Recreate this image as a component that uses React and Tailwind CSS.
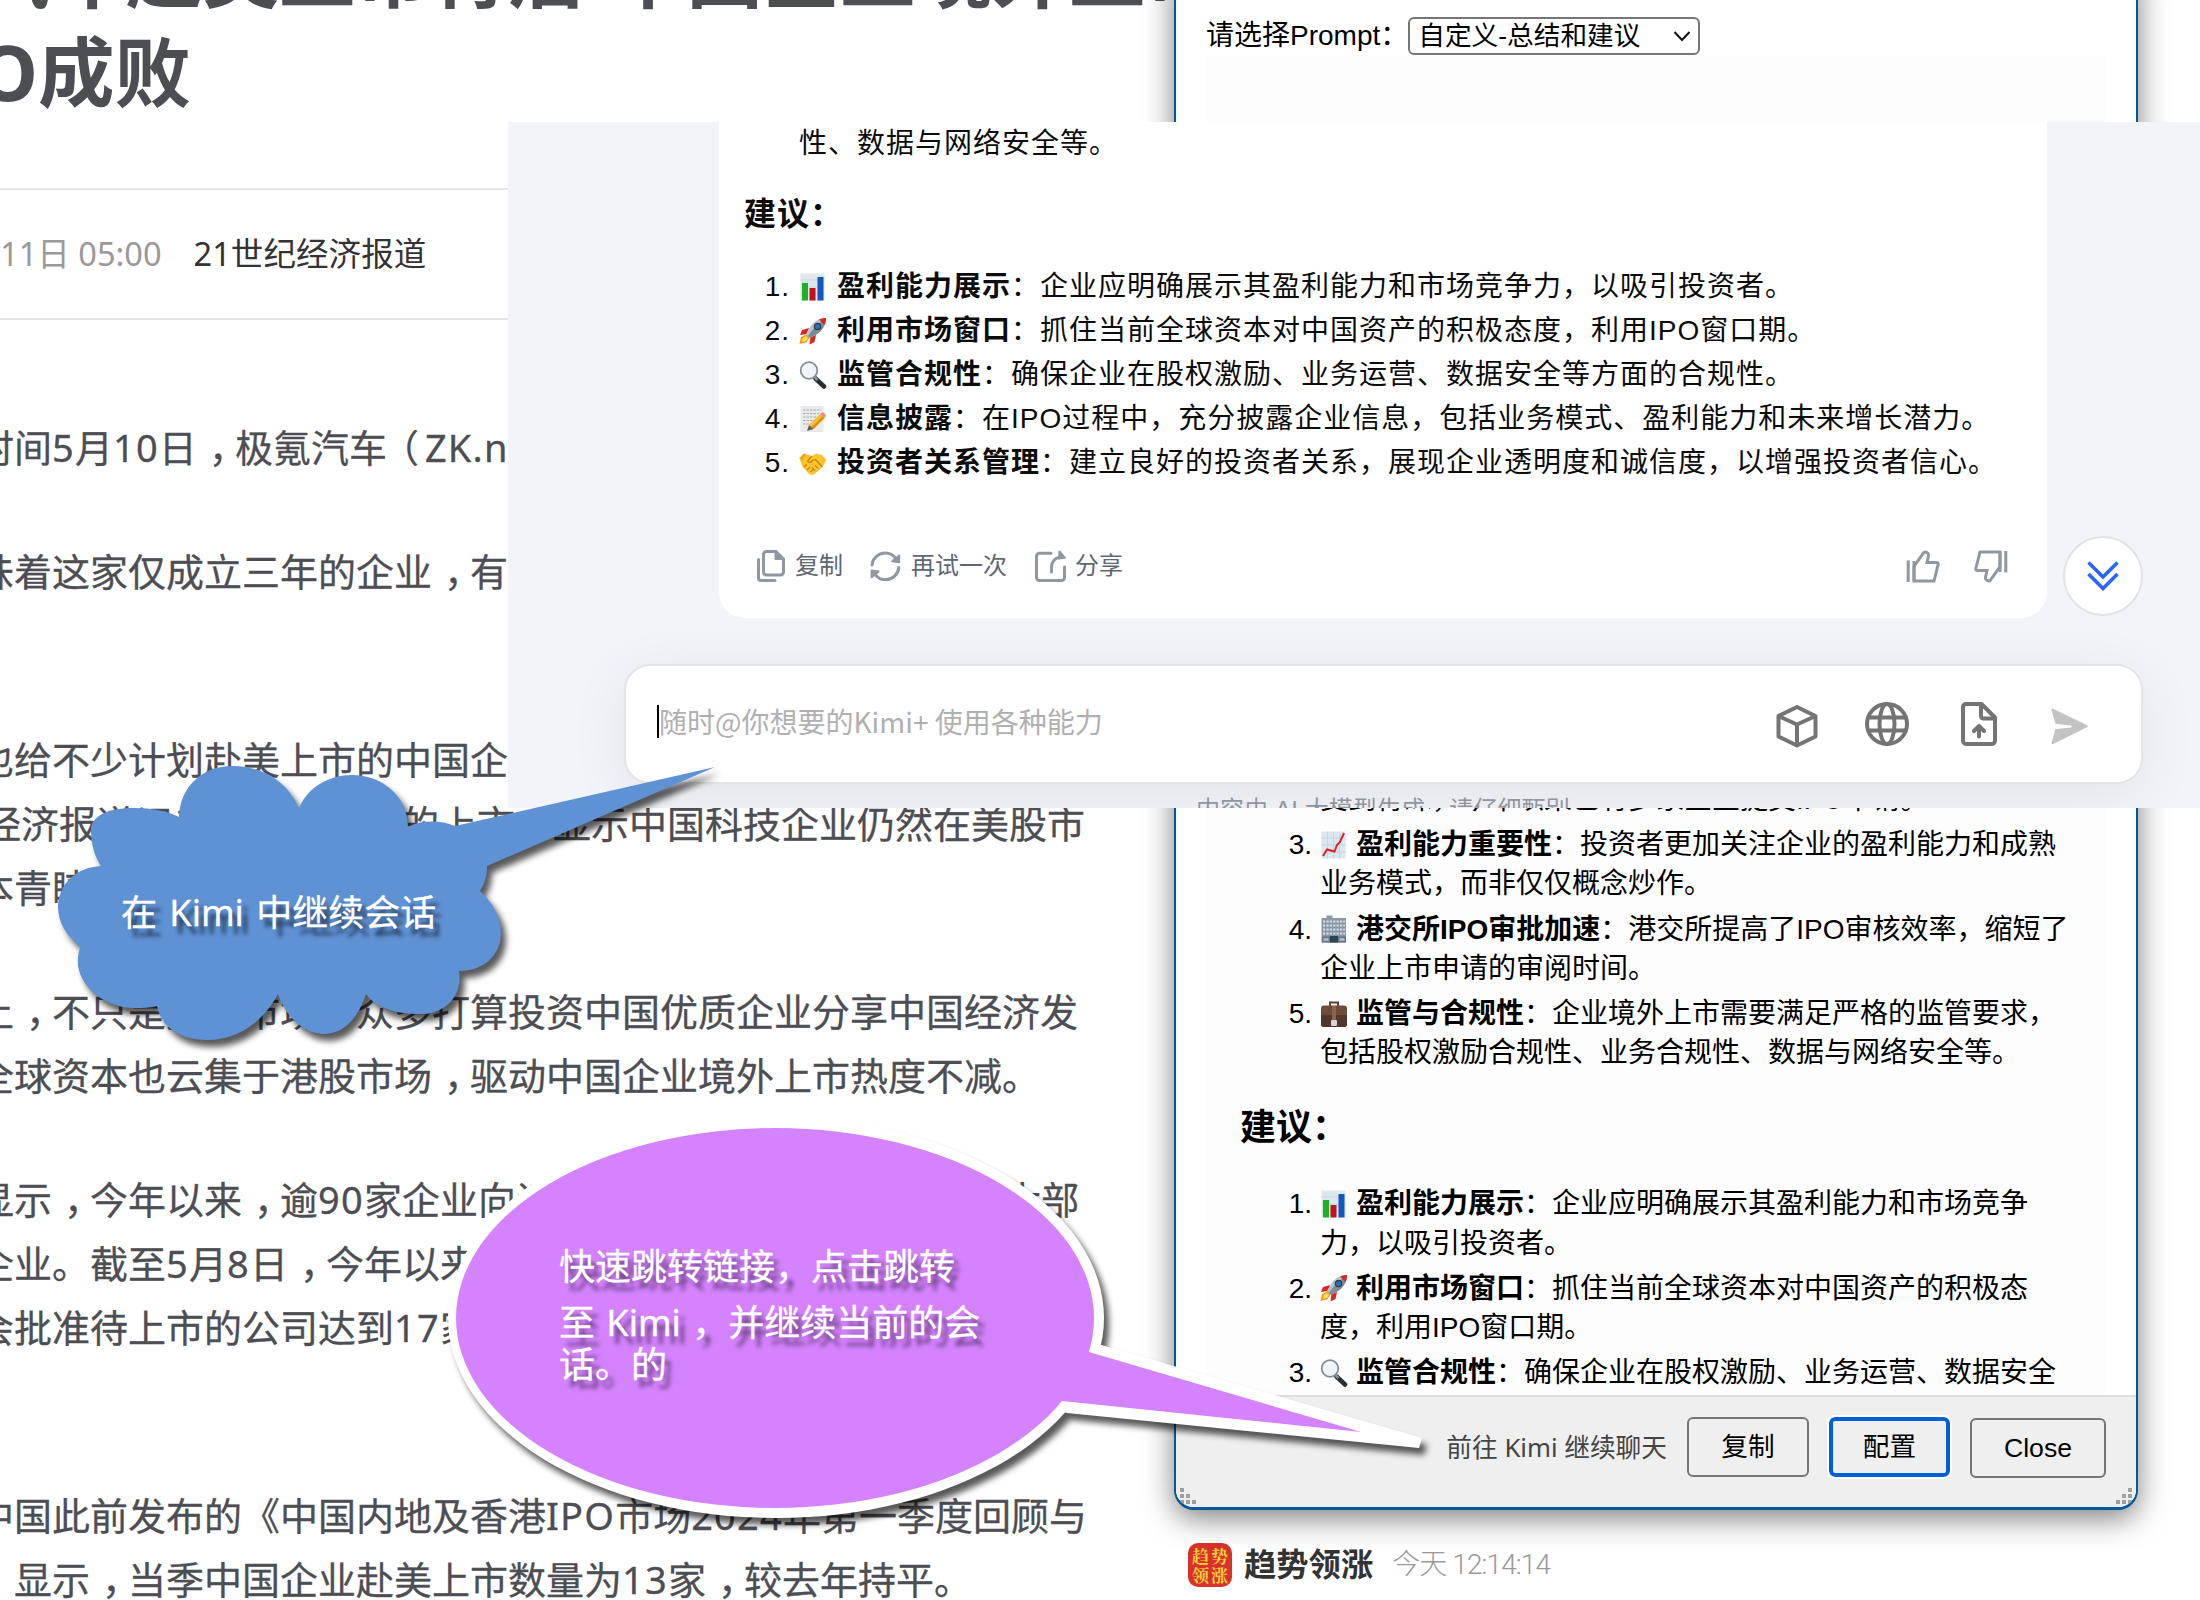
import React from "react";

const CJK = "font-['Noto_Sans','Noto_Sans_CJK_SC',sans-serif]";
const HEL = "font-['Liberation_Sans','Noto_Sans_CJK_SC',sans-serif]";

/* ---------- emoji drawings ---------- */

function BarChart() {
  return (
    <svg viewBox="0 0 28 28" className="size-full">
      <rect x="1.5" y="0.5" width="24" height="27" fill="#dfe7ee" />
      <path d="M1.5 7h24M1.5 14h24M1.5 21h24" stroke="#c9d5df" strokeWidth="1" />
      <rect x="3" y="10" width="6" height="17.5" fill="#1db224" />
      <rect x="10.5" y="15" width="6" height="12.5" fill="#c1131f" />
      <rect x="18.5" y="4" width="6" height="23.5" fill="#1557c0" />
    </svg>
  );
}

function Rocket() {
  return (
    <svg viewBox="0 0 28 28" className="size-full">
      <path d="M8 17 2 20l-1.500 7 6.500-1.500L11 20z" fill="#f59a1b" />
      <path d="M7 19l-3 2-1 4 4-1 2-3z" fill="#ffe25a" />
      <path d="M10 11 3 13l-2 5 7-1zM17 18l-1.500 7-5 2.500 1-8z" fill="#d8281f" />
      <path d="M27 1c-6 0-12 3-16 9l-4 7 4 4 7-4c6-4 9-10 9-16z" fill="#b9c3cd" />
      <path d="M27 1c-5 3-12 9-18 18l2 2 7-4c6-4 9-10 9-16z" fill="#7d8a98" />
      <path d="M27 1c-2.500 0-4.800.5-7 1.500L25.500 8C26.500 5.800 27 3.500 27 1z" fill="#d8281f" />
      <circle cx="18.500" cy="9.500" r="3.200" fill="#2f6fae" stroke="#2b3b4a" strokeWidth="1.200" />
    </svg>
  );
}

function Magnifier() {
  return (
    <svg viewBox="0 0 28 28" className="size-full">
      <path d="m16.500 17.500 8.500 8" stroke="#2c2f33" strokeWidth="4.600" strokeLinecap="round" />
      <path d="m15.500 16 3 3" stroke="#8c9299" strokeWidth="2.500" />
      <circle cx="10" cy="9.500" r="8.300" fill="#eef4f8" stroke="#858d95" strokeWidth="1.800" />
      <path d="M5 8.500c.6-2.200 2.200-3.600 4.500-4" stroke="#fff" strokeWidth="1.800" fill="none" />
    </svg>
  );
}

function Memo() {
  return (
    <svg viewBox="0 0 28 28" className="size-full">
      <rect x="1.500" y="1" width="23" height="26" fill="#e9eaeb" />
      <path d="M4 5h18M4 8.500h16M4 12h17M4 15.500h12M4 19h8" stroke="#a7abaf" strokeWidth="1.100" strokeDasharray="2.500 1" />
      <path d="m10 20 11-11 4.500 4-11 11z" fill="#f6bf2d" />
      <path d="m12.500 22.300 11-11 2 1.700-11 11z" fill="#dc9312" />
      <path d="m21 9 1.800-1.500c1.500-.8 4.600 2 3.800 3.800L25.500 13z" fill="#ef8b8b" />
      <path d="m10 20-2 6 6.500-2z" fill="#6b5a48" />
    </svg>
  );
}

function Handshake() {
  return (
    <svg viewBox="0 0 28 28" className="size-full">
      <path d="M.5 9 5 4.500l8 2.500 4-2.500 6 1.500 4.500 5-4 7-8.500 7.500-3 .5-3-2L3 17z" fill="#fbc52f" />
      <path d="m13 7-4.500 5c1 2 3.500 1.500 5-.5l3-1 7 7.500" stroke="#c98512" strokeWidth="1.300" fill="none" />
      <path d="m5 18 3-2.500M8 21l3-3M11.500 23l2.500-2.500M16 21.500l-3-3M19 19.500l-3-3" stroke="#c98512" strokeWidth="1.200" />
      <path d="M.5 9 5 4.500 7 6 3 12z" fill="#f0a71d" />
    </svg>
  );
}

function ChartUp() {
  return (
    <svg viewBox="0 0 28 28" className="size-full">
      <rect x="1.500" y="0.500" width="24" height="27" fill="#dce7ef" />
      <path d="M1.500 7h24M1.500 14h24M1.500 21h24M7.500.5v27M13.500.5v27M19.500.5v27" stroke="#c4d2dd" strokeWidth=".9" />
      <path d="m3 25 4-6.500 7.500 2L17 14l3-3L24 2" stroke="#d9232b" strokeWidth="2" fill="none" />
    </svg>
  );
}

function Office() {
  return (
    <svg viewBox="0 0 28 28" className="size-full">
      <path d="M1.500 3h5V.5h6V3H26v24.500H1.500z" fill="#8d979f" />
      <path d="M3 6.500h22M3 10.500h22M3 14.500h22M3 18.500h22" stroke="#c8e0ee" strokeWidth="2.200" strokeDasharray="2.200 1.200" />
      <rect x="2" y="21.500" width="24" height="6" fill="#6c767e" />
      <rect x="10" y="21" width="8" height="6.500" fill="#2d4552" />
      <path d="M3.500 24.500h5M19.500 24.500h5" stroke="#a8c6d6" strokeWidth="2.500" />
    </svg>
  );
}

function Briefcase() {
  return (
    <svg viewBox="0 0 28 28" className="size-full">
      <path d="M10 6V2.500h8V6" stroke="#5b4335" strokeWidth="2" fill="none" />
      <rect x="1" y="5.500" width="26" height="21.500" rx="3" fill="#6d4c3c" />
      <path d="M1 15h26v9a3 3 0 0 1-3 3H4a3 3 0 0 1-3-3z" fill="#51362a" />
      <rect x="12" y="6" width="4" height="14" fill="#8a6450" />
      <rect x="11" y="20" width="6" height="6" rx="1" fill="#d8d4ce" />
    </svg>
  );
}

/* ---------- background article ---------- */

function Line({ children, className = "" }) {
  const parts = children.split(/([，（]|[A-Za-z0-9.]+)/);
  return (
    <p className={"h-[64px] leading-[64px] whitespace-nowrap " + className}>
      {parts.map((p, i) => {
        if (p === "，") return <span key={i} className="relative left-[12px]">，</span>;
        if (p === "（") return <span key={i} className="relative -left-[6px]">（</span>;
        if (/^[A-Za-z0-9.]+$/.test(p)) return <span key={i} className="tracking-[1.200px]">{p}</span>;
        return p;
      })}
    </p>
  );
}

function Article() {
  return (
    <article className={"w-[1175px] shrink-0 overflow-hidden text-[#4d4e53] " + CJK}>
      <h1 className="-mt-[77px] h-[198px] text-[76.500px] leading-[99px] font-bold whitespace-nowrap">
        <span className="-ml-[27px] block [word-spacing:5px]">汽车赴美上市背后 中国企业境外上市</span>
        <span className="flex w-[191px] justify-end">IPO成败</span>
      </h1>
      <div className="mt-[67px] flex h-[132px] items-center border-y-2 border-[#e5e5e5] text-[32.600px] whitespace-nowrap">
        <span className="mt-px text-[#999]">11日 05:00</span>
        <span className="mt-px ml-[32px] text-[#333]">21世纪经济报道</span>
      </div>
      <div className="mt-[95px] -ml-[24px] text-[38px] [-webkit-text-stroke:0.300px]">
        <Line>时间5月10日，极氪汽车（ZK.n</Line>
        <Line className="mt-[60px]">味着这家仅成立三年的企业，有</Line>
        <div className="mt-[124px]">
          <Line>也给不少计划赴美上市的中国企业</Line>
          <Line className="ml-[7px]">经济报道记者表示，极氪的上市，显示中国科技企业仍然在美股市</Line>
          <Line>本青睐。</Line>
        </div>
        <div className="mt-[60px]">
          <Line>上，不只是美股市场，众多打算投资中国优质企业分享中国经济发</Line>
          <Line>全球资本也云集于港股市场，驱动中国企业境外上市热度不减。</Line>
        </div>
        <div className="mt-[60px]">
          <Line>显示，今年以来，逾90家企业向证监会提交境外IPO备案，绝大部</Line>
          <Line>企业。截至5月8日，今年以来已有多家企业完成境外备案，均可</Line>
          <Line>会批准待上市的公司达到17家。</Line>
        </div>
        <div className="mt-[124px]">
          <Line>中国此前发布的《中国内地及香港IPO市场2024年第一季度回顾与</Line>
          <Line>》显示，当季中国企业赴美上市数量为13家，较去年持平。</Line>
        </div>
      </div>
    </article>
  );
}

function FeedRow() {
  return (
    <aside className="mb-[11px] ml-[13px] flex items-center self-end">
      <div className="grid size-[44px] grid-cols-2 place-items-center rounded-[10px] bg-[#d8332a] p-[3px] font-['Noto_Serif_CJK_SC','Noto_Sans_CJK_SC',serif] text-[17px] leading-[18px] font-bold text-[#f8d33c]">
        <span>趋</span>
        <span>势</span>
        <span>领</span>
        <span>涨</span>
      </div>
      <span className={"ml-[12px] text-[32.300px] leading-[48px] font-bold text-[#333] " + HEL}>趋势领涨</span>
      <span className="ml-[19px] font-['Roboto','Noto_Sans_CJK_SC',sans-serif] text-[28px] leading-[48px] font-light tracking-[-0.900px] text-[#999]">今天 12:14:14</span>
    </aside>
  );
}

/* ---------- assistant dialog ---------- */

function Item({ n, icon, title, first, second }) {
  return (
    <li className="mb-[6px] flex leading-[39.200px] whitespace-nowrap">
      <span className="mr-[8px] w-[60px] text-right">{n}.</span>
      <div>
        <div className="flex items-center">
          <span className="mr-[8px] size-[28px]">{icon}</span>
          <b>{title}</b>：{first}
        </div>
        {second && <div>{second}</div>}
      </div>
    </li>
  );
}

function Grip({ flip }) {
  const dots = [[0, 0], [0, 6], [6, 6], [0, 12], [6, 12], [12, 12]];
  return (
    <svg width="16" height="16" viewBox="0 0 16 16" className={flip ? "-scale-x-100" : ""}>
      {dots.map(([x, y]) => (
        <rect key={x + "-" + y} x={x} y={y} width="4" height="4" fill="#a0a0a0" />
      ))}
    </svg>
  );
}

function Dialog() {
  return (
    <section className={"absolute top-[-40px] left-[1174px] flex h-[1550px] w-[964px] flex-col overflow-hidden rounded-[20px] border-2 border-b-[3px] border-[#00599c] bg-white text-[28px] text-black shadow-[0_8px_30px_rgba(0,0,0,0.5)] " + HEL}>
      <header className="mt-[55px] ml-[30px] flex h-[38px] shrink-0 items-center">
        <span>请选择Prompt：</span>
        <div className="flex h-[38px] w-[292px] items-center justify-between rounded-[6px] border-2 border-[#767676] pr-[7px] pl-[8px] text-[26.670px]">
          <span>自定义-总结和建议</span>
          <svg width="18" height="12" viewBox="0 0 18 12" fill="none" stroke="#111" strokeWidth="2">
            <path d="m1.500 2 7.500 8 7.500-8" />
          </svg>
        </div>
      </header>
      <div className="mx-[30px] flex min-h-0 flex-1 flex-col overflow-hidden bg-[#fdfdfd]">
        <ol className="mt-[725px] ml-[46px]">
          <li className="mb-[6px] ml-[68px] leading-[39.200px] whitespace-nowrap">受到青睐，今年以来已有多家企业提交IPO申请。</li>
          <Item n={3} icon={<ChartUp />} title="盈利能力重要性" first="投资者更加关注企业的盈利能力和成熟" second="业务模式，而非仅仅概念炒作。" />
          <Item n={4} icon={<Office />} title="港交所IPO审批加速" first="港交所提高了IPO审核效率，缩短了" second="企业上市申请的审阅时间。" />
          <Item n={5} icon={<Briefcase />} title="监管与合规性" first="企业境外上市需要满足严格的监管要求，" second="包括股权激励合规性、业务合规性、数据与网络安全等。" />
        </ol>
        <h3 className="mt-[25px] ml-[34px] text-[36px] leading-[50px] font-bold">建议：</h3>
        <ol className="mt-[31px] ml-[46px]">
          <Item n={1} icon={<BarChart />} title="盈利能力展示" first="企业应明确展示其盈利能力和市场竞争" second="力，以吸引投资者。" />
          <Item n={2} icon={<Rocket />} title="利用市场窗口" first="抓住当前全球资本对中国资产的积极态" second="度，利用IPO窗口期。" />
          <Item n={3} icon={<Magnifier />} title="监管合规性" first="确保企业在股权激励、业务运营、数据安全" />
        </ol>
      </div>
      <footer className="relative flex h-[112px] shrink-0 justify-end border-t-2 border-[#dfdfdf] bg-[#efefef] pt-[20px] pr-[30px] text-[26.670px]">
        <span className="mr-[20px] font-['Noto_Sans','Noto_Sans_CJK_SC',sans-serif] text-[25.700px] leading-[61px] text-[#444]">前往 Kimi 继续聊天</span>
        <button className="mr-[20px] h-[60px] w-[122px] rounded-[6px] border-2 border-[#767676]">复制</button>
        <button className="mr-[20px] h-[60px] w-[121px] rounded-[6px] border-4 border-[#0060d8] outline-2 outline-white">配置</button>
        <button className="mt-px h-[60px] w-[136px] rounded-[6px] border-2 border-[#767676]">Close</button>
        <div className="absolute inset-x-[4px] bottom-[3px] flex justify-between">
          <Grip />
          <Grip flip />
        </div>
      </footer>
    </section>
  );
}

/* ---------- chat panel ---------- */

const suggestions = [
  [<BarChart />, "盈利能力展示", "企业应明确展示其盈利能力和市场竞争力，以吸引投资者。"],
  [<Rocket />, "利用市场窗口", "抓住当前全球资本对中国资产的积极态度，利用IPO窗口期。"],
  [<Magnifier />, "监管合规性", "确保企业在股权激励、业务运营、数据安全等方面的合规性。"],
  [<Memo />, "信息披露", "在IPO过程中，充分披露企业信息，包括业务模式、盈利能力和未来增长潜力。"],
  [<Handshake />, "投资者关系管理", "建立良好的投资者关系，展现企业透明度和诚信度，以增强投资者信心。"],
];

function CopyIcon() {
  return (
    <svg width="28" height="32" viewBox="0 0 28 32" fill="none" stroke="#9097a0" strokeWidth="3" strokeLinecap="round" className="shrink-0">
      <path d="M9.500 1.500H19l7.500 7.500v13a3 3 0 0 1-3 3h-14a3 3 0 0 1-3-3V4.500a3 3 0 0 1 3-3z" />
      <path d="M18 1.500V9.500h8.500z" fill="#9097a0" strokeWidth="1" />
      <path d="M1.500 9.500v18.500a2.500 2.500 0 0 0 2.500 2.500h14" />
    </svg>
  );
}

function RetryIcon() {
  return (
    <svg width="31" height="31" viewBox="0 0 31 31" fill="none" stroke="#9097a0" strokeWidth="3" strokeLinecap="round" className="shrink-0">
      <path d="M2 14C2.600 7.300 8.300 2 15.300 2c4.500 0 8.500 2.300 10.800 6" />
      <path d="M29.200 4.500v6.800l-7-1z" fill="#9097a0" strokeWidth="2" strokeLinejoin="round" />
      <path d="M28.800 16.500C28.200 23.400 22.500 28.700 15.500 28.700c-4.500 0-8.500-2.300-10.800-6" />
      <path d="M1.600 26.200v-6.800l7 1z" fill="#9097a0" strokeWidth="2" strokeLinejoin="round" />
    </svg>
  );
}

function ShareIcon() {
  return (
    <svg width="31" height="32" viewBox="0 0 31 32" fill="none" stroke="#9097a0" strokeWidth="3" strokeLinecap="round" className="shrink-0">
      <path d="M16 3.200H4.500a3 3 0 0 0-3 3v21.300a3 3 0 0 0 3 3h22a3 3 0 0 0 3-3V17" />
      <path d="M16.500 22v-4.500c0-6 3-9.500 9-10.500" />
      <path d="M24.500 1.500 30 7.800l-6 .8z" fill="#9097a0" strokeWidth="2" strokeLinejoin="round" />
    </svg>
  );
}

function Thumb({ down }) {
  return (
    <svg width="34" height="33" viewBox="0 0 34 33" fill="none" stroke="#9097a0" strokeWidth="3" className={down ? "rotate-180" : ""}>
      <path d="M2.200 10.500V32" />
      <path d="M8 31V16.500L17.500 3c1.500-2 5-.5 5.200 2L21 12.500h9.500c1.200 0 2 1 1.600 2.200L28 31z" />
      <path d="M8 11v20" />
    </svg>
  );
}

function ChatPanel() {
  return (
    <section className={"absolute top-[122px] left-[508px] h-[686px] w-[1692px] overflow-hidden bg-[#f3f4fa] " + HEL}>
      <div className="flex items-end">
        <div className="ml-[211px] flex h-[496px] w-[1328px] flex-col rounded-b-[26px] bg-white text-[28px] tracking-[1px] text-[#0c0c0c]">
          <p className="mt-[2px] ml-[80px] h-[40px] leading-[40px]">性、数据与网络安全等。</p>
          <h3 className="mt-[26px] ml-[25px] text-[32px] leading-[48px] font-bold">建议：</h3>
          <ol className="mt-[27px]">
            {suggestions.map(([icon, title, text], i) => (
              <li key={title} className="flex h-[44px] items-center whitespace-nowrap">
                <span className="mr-[9px] w-[71px] text-right">{i + 1}.</span>
                <span className="mr-[10px] size-[28px]">{icon}</span>
                <b>{title}</b>：{text}
              </li>
            ))}
          </ol>
          <div className="mt-[64px] flex h-[34px] items-center pr-[39px] pl-[38px] text-[24px] tracking-normal text-[#5f6773]">
            <CopyIcon />
            <span className="ml-[10px]">复制</span>
            <span className="w-[27px]" />
            <RetryIcon />
            <span className="ml-[10px]">再试一次</span>
            <span className="w-[28px]" />
            <ShareIcon />
            <span className="ml-[9px]">分享</span>
            <div className="ml-auto flex gap-[34px]">
              <Thumb />
              <Thumb down />
            </div>
          </div>
        </div>
        <div className="mb-[2px] ml-[16px] flex size-[80px] items-center justify-center rounded-full border-2 border-[#e3e3e5] bg-white">
          <svg width="32" height="30" viewBox="0 0 32 30" fill="none" stroke="#2b65ff" strokeWidth="3.600">
            <path d="m1.500 1.500 14.500 14.500L30.500 1.500" />
            <path d="m1.500 13 14.500 14.500L30.500 13" />
          </svg>
        </div>
      </div>
      <div className="mt-[46px] ml-[116px] flex h-[120px] w-[1519px] items-center rounded-[26px] border-2 border-[#e4e4e6] bg-white pr-[53px] pl-[31px] shadow-[0_12px_60px_rgba(0,0,0,0.07)]">
        <span className="mb-[6px] h-[33px] w-[2px] bg-black" />
        <span className="mb-[7px] font-['Noto_Sans_CJK_SC',sans-serif] text-[28px] leading-[40px] whitespace-nowrap text-[#b0b0b0]">随时@你想要的Kimi+ 使用各种能力</span>
        <div className="ml-auto flex items-center text-[#747474]">
          <svg width="42" height="44" viewBox="0 0 42 44" fill="none" stroke="currentColor" strokeWidth="4" strokeLinejoin="round" className="mt-[3px]">
            <path d="M21 3 39.500 12v20.500L21 41.500 2.500 32.500V12z" />
            <path d="M2.500 12 21 20.500 39.500 12M21 20.500v21" />
          </svg>
          <svg width="44" height="44" viewBox="0 0 44 44" fill="none" stroke="currentColor" strokeWidth="4" className="ml-[47px]">
            <circle cx="22" cy="22" r="20" />
            <ellipse cx="22" cy="22" rx="7.500" ry="20" />
            <path d="M3.500 15.500h37M3.500 28.500h37" />
          </svg>
          <svg width="36" height="44" viewBox="0 0 36 44" fill="none" stroke="currentColor" strokeWidth="4" strokeLinejoin="round" className="ml-[52px]">
            <path d="M5 2h15.500L34 15.500V38.500a3.500 3.500 0 0 1-3.500 3.500H5.500A3.500 3.500 0 0 1 2 38.500V5a3 3 0 0 1 3-3z" />
            <path d="M20 2.500V14a2.500 2.500 0 0 0 2.500 2.500H33.500" />
            <path d="M18 34.500V25m-5 4 5-5 5 5" strokeLinecap="round" />
          </svg>
          <svg width="37" height="37" viewBox="0 0 37 37" className="mt-[4px] ml-[54px]">
            <path d="M.5 2C.3.800 1.200.300 2.200.700L36 17.200c1 .500 1 1.600 0 2.100L2.200 36c-1 .500-1.900 0-1.700-1.200L4 22.500c.2-.8.800-1.300 1.600-1.400L20 19.500c1-.2 1-1.700 0-1.900L5.600 16c-.8-.1-1.400-.6-1.600-1.400z" fill="#c3c3c3" />
          </svg>
        </div>
      </div>
      <p className="mt-[8px] ml-[688px] text-[24px] leading-[36px] tracking-[0.100px] whitespace-nowrap text-[#8f959e]">内容由 AI 大模型生成，请仔细甄别</p>
    </section>
  );
}

/* ---------- callouts ---------- */

function CloudCallout() {
  return (
    <div className="absolute top-[750px] left-[40px] h-[310px] w-[700px]">
      <svg width="700" height="310" viewBox="40 750 700 310" className="block drop-shadow-[5px_7px_3px_rgba(0,0,0,0.65)]">
        <path
          fill="#5f91d5"
          d="M179 817C180 786 203 766 232 766C262 766 286 780 299 808C308 787 329 775 352 775C382 775 408 796 408 827C421 820 440 820 455 826L715 767L487 866C487 876 485 883 480 891C493 903 501 917 501 933C501 955 484 971 459 971C463 995 446 1014 421 1014C397 1014 377 1009 366 994C358 1018 344 1034 324 1034C304 1034 286 1017 278 994C263 1022 238 1040 207 1040C179 1040 161 1026 157 1006C150 1008 143 1008 135 1008C100 1008 68 978 80.500 947C67 936 58 923 58 907C58 885 76 867 101 866C94 855 91 843 91 830C91 815 110 808 134 808C152 808 167 811 179 817Z"
        />
      </svg>
      <p className={"absolute top-[139px] left-[81px] text-[36px] leading-[48px] whitespace-nowrap text-white [-webkit-text-stroke:0.300px] [text-shadow:6px_8px_4px_rgba(0,0,0,0.6)] [word-spacing:3px] " + CJK}>在 Kimi 中继续会话</p>
    </div>
  );
}

function BubbleCallout() {
  return (
    <div className="absolute top-[1100px] left-[430px] h-[440px] w-[1020px]">
      <svg width="1020" height="440" viewBox="430 1100 1020 440" className="block">
        <g fill="#fff" className="drop-shadow-[5px_7px_3px_rgba(0,0,0,0.65)]">
          <ellipse cx="776" cy="1318" rx="328" ry="200" />
          <path d="M1098 1344L1422 1438L1419 1448L1067 1413L900 1360z" />
        </g>
        <g fill="#d582ff">
          <ellipse cx="775" cy="1318" rx="319" ry="190" />
          <path d="M1089 1352L1361 1432L1062 1401L900 1350z" />
        </g>
      </svg>
      <div className={"absolute top-[139px] left-[129px] text-[36px] whitespace-nowrap text-white [-webkit-text-stroke:0.300px] [text-shadow:6px_8px_4px_rgba(0,0,0,0.5)] [word-spacing:2px] " + CJK}>
        <p className="leading-[56px]">快速跳转链接，点击跳转</p>
        <p className="leading-[56px]">至 Kimi ，并继续当前的会</p>
        <p className="-mt-[7px] leading-[42px]">话。的</p>
      </div>
    </div>
  );
}

export default function App() {
  return (
    <main className="relative flex h-[1600px] w-[2200px] overflow-hidden bg-white">
      <Article />
      <FeedRow />
      <Dialog />
      <ChatPanel />
      <CloudCallout />
      <BubbleCallout />
    </main>
  );
}
